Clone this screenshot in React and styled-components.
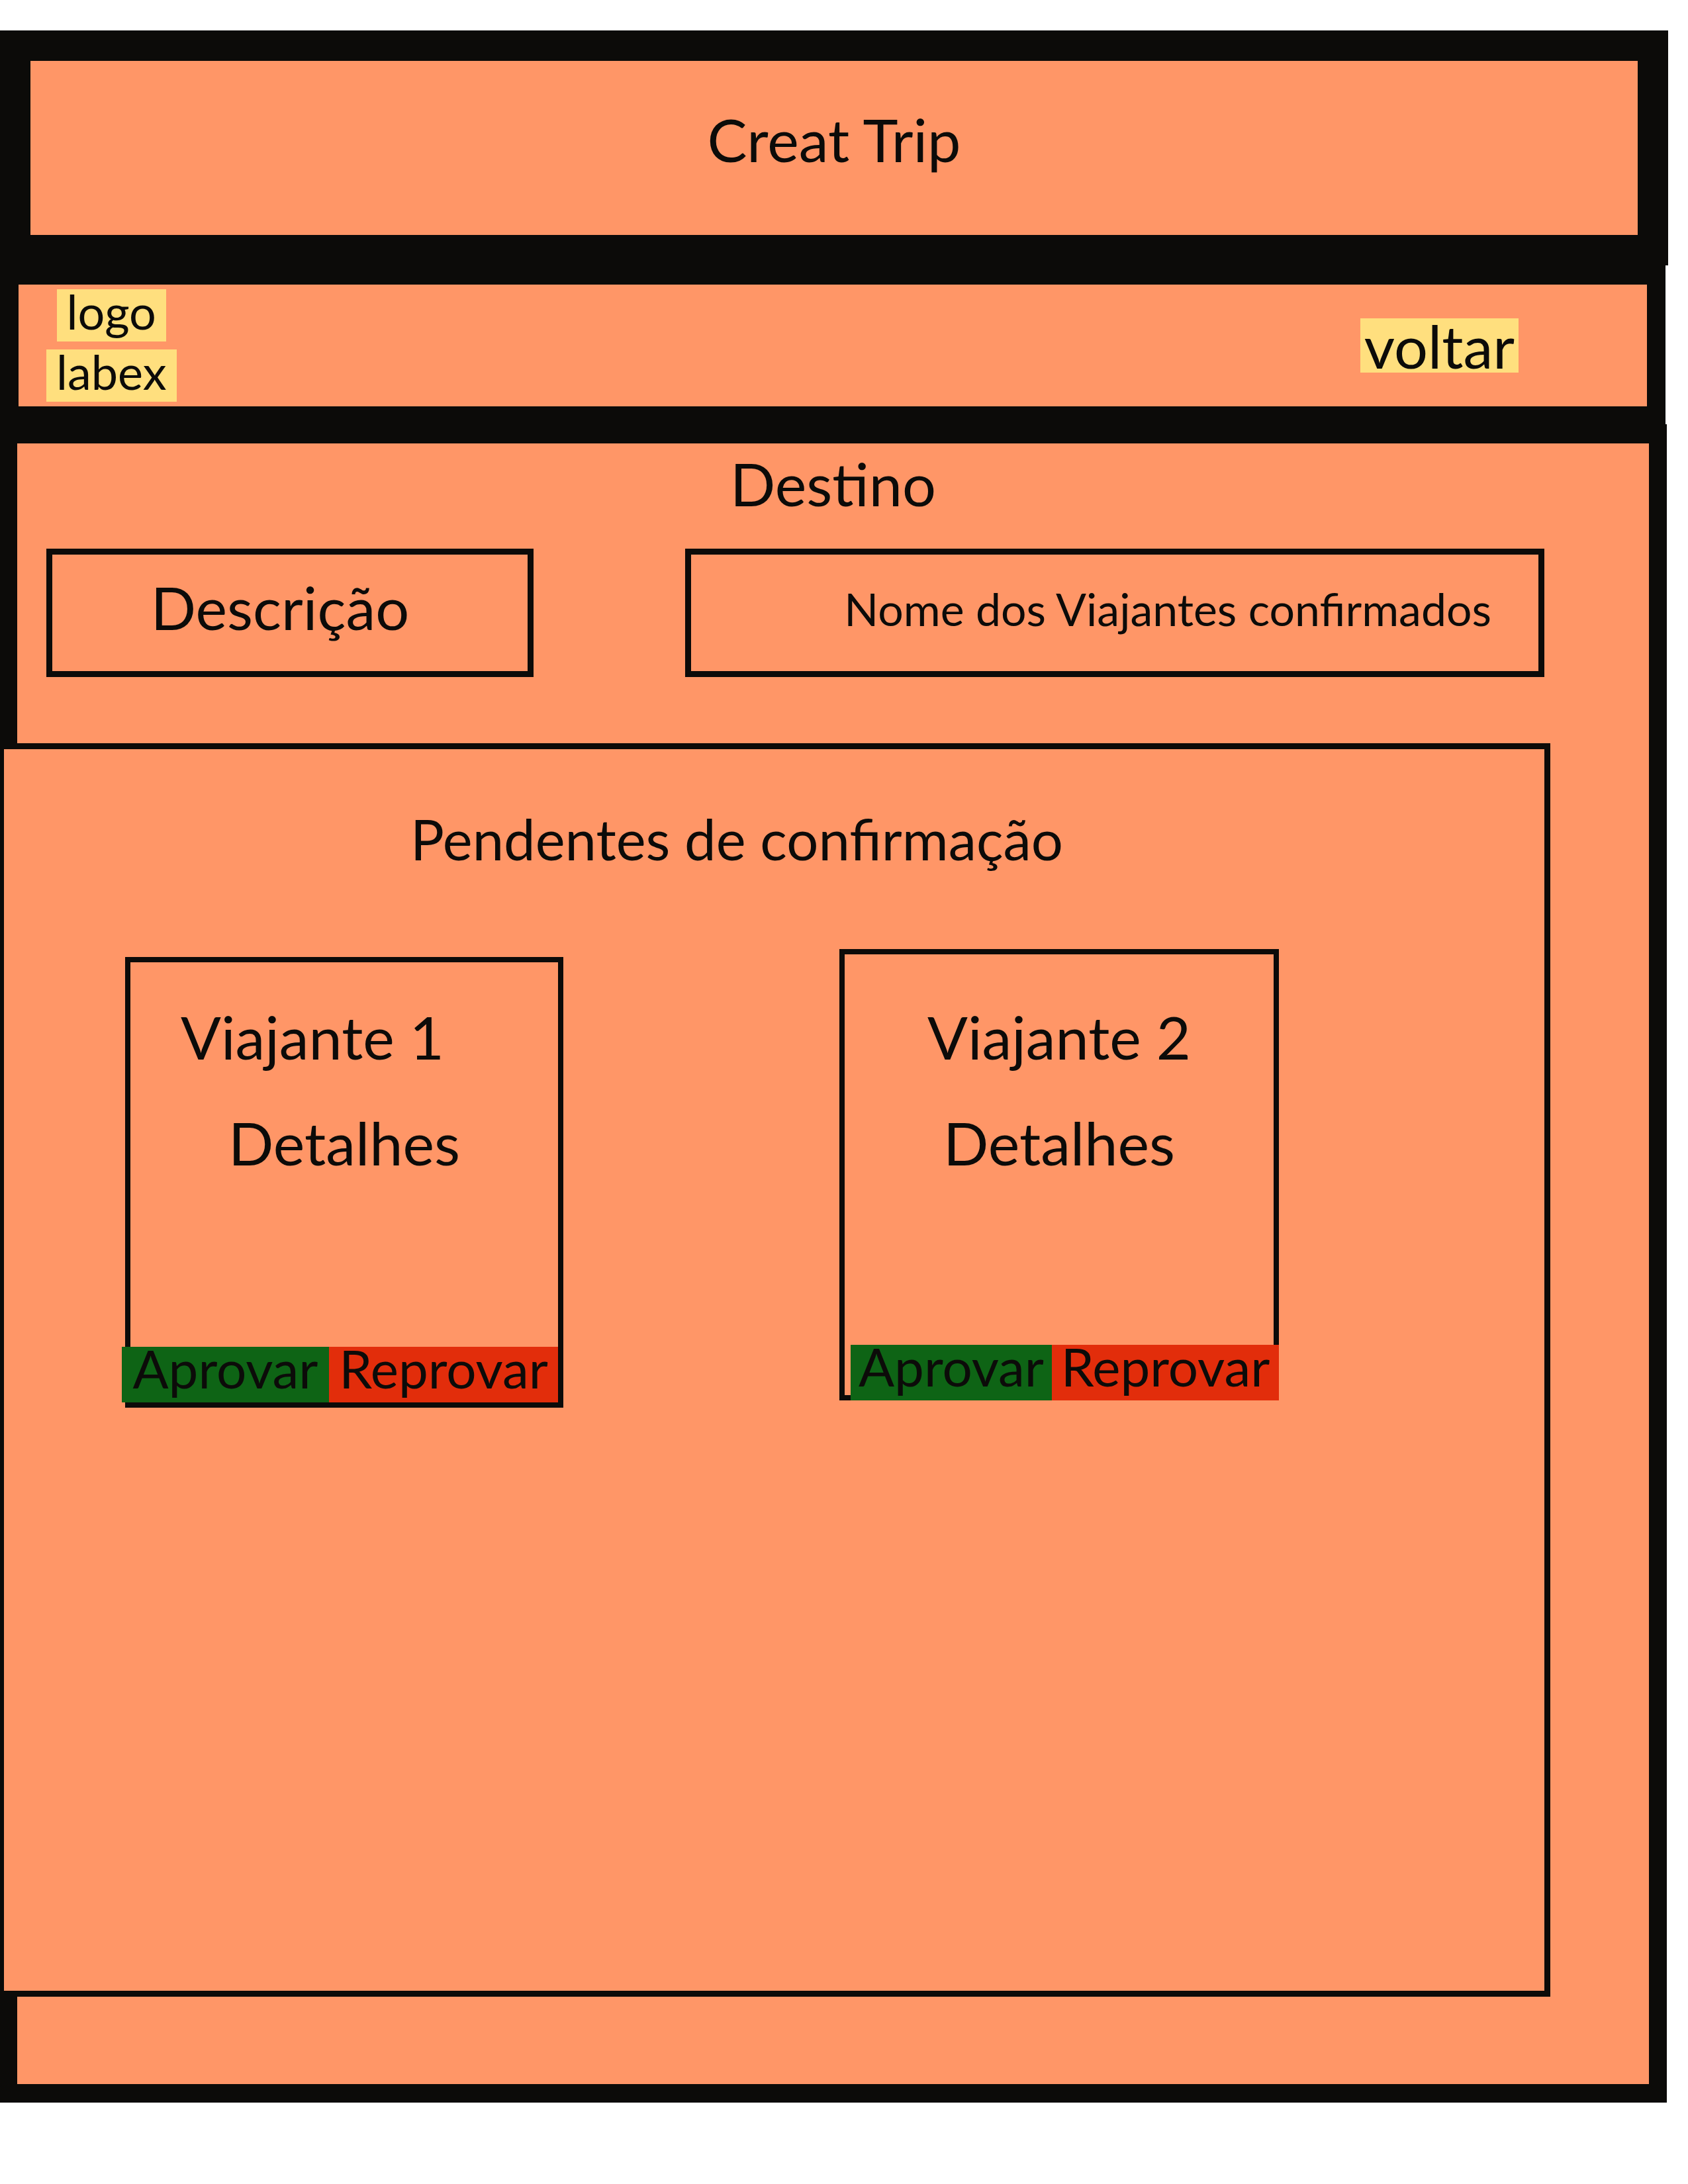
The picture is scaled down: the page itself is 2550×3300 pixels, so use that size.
import styled, { createGlobalStyle } from "styled-components";

const INK = "#0c0b09";
const ORANGE = "#ff9667";

const GlobalStyle = createGlobalStyle`
  body {
    margin: 0;
    background: #ffffff;
    font-family: "Lato", "Liberation Sans", sans-serif;
    color: ${INK};
  }
`;

const Page = styled.div`
  padding: 46px 0 123px;
  display: flex;
  flex-direction: column;
  align-items: flex-start;
`;

const Header = styled.header`
  width: 2428px;
  height: 190px;
  padding-top: 73px;
  border: 46px solid ${INK};
  background: ${ORANGE};
  display: flex;
  justify-content: center;
  align-items: flex-start;
`;

const Title = styled.h1`
  margin: 0;
  font-size: ${(p) => p.$size || 90}px;
  font-weight: 400;
  line-height: 1;
  text-align: ${(p) => p.$align || "center"};
  padding: ${(p) => p.$pad || "0"};
`;

const Nav = styled.nav`
  width: 2224px;
  height: 184px;
  border-style: solid;
  border-color: ${INK};
  border-width: 29px 28px 27px 28px;
  background: ${ORANGE};
  padding: 0 194px 0 42px;
  display: flex;
  align-items: center;
  justify-content: space-between;
`;

const LogoStack = styled.div`
  display: flex;
  flex-direction: column;
  align-items: center;
  gap: 12px;
`;

const Tag = styled.span`
  display: inline-block;
  background: #ffdf7e;
  font-size: ${(p) => p.$size || 72}px;
  height: ${(p) => p.$h || 79}px;
  line-height: ${(p) => p.$lh || 66}px;
  padding: 0 ${(p) => p.$px || 15}px;
  box-sizing: border-box;
`;

const Main = styled.main`
  width: 2465px;
  border-style: solid;
  border-color: ${INK};
  border-width: 29px 27px 28px 26px;
  background: ${ORANGE};
  padding: 15px 0 132px;
  display: flex;
  flex-direction: column;
`;

const BoxRow = styled.div`
  display: flex;
  gap: 229px;
  margin: 54px 0 0 44px;
`;

const InfoBox = styled.div`
  width: ${(p) => p.$w}px;
  height: 194px;
  box-sizing: border-box;
  border: 9px solid ${INK};
  display: flex;
  align-items: center;
  justify-content: ${(p) => p.$justify || "center"};
  padding: ${(p) => p.$pad || "0"};
  font-size: ${(p) => p.$size || 90}px;
  line-height: 1;
`;

const Pending = styled.section`
  width: 2342px;
  height: 1894px;
  box-sizing: border-box;
  margin: 100px 0 0 -26px;
  border: 9px solid ${INK};
  border-left-width: 6px;
  background: ${ORANGE};
  padding-top: 93px;
  display: flex;
  flex-direction: column;
`;

const CardRow = styled.div`
  display: flex;
  align-items: flex-start;
  gap: 417px;
  margin-top: 124px;
  padding-left: 183px;
`;

const Card = styled.div`
  width: ${(p) => p.$w}px;
  height: ${(p) => p.$h}px;
  margin-top: ${(p) => p.$mt || 0}px;
  box-sizing: border-box;
  border: 8px solid ${INK};
  padding-top: ${(p) => p.$pt}px;
  display: flex;
  flex-direction: column;
  align-items: stretch;
`;

const CardText = styled.div`
  font-size: 90px;
  line-height: 1;
  text-align: center;
  padding-right: ${(p) => p.$shift || 0}px;
  margin-top: ${(p) => p.$mt || 0}px;
`;

const Actions = styled.div`
  margin: auto 0 0;
  margin-left: ${(p) => p.$ml}px;
  margin-right: ${(p) => p.$mr || 0}px;
  margin-bottom: ${(p) => p.$mb || 0}px;
  display: flex;
`;

const ActionBtn = styled.button`
  border: none;
  margin: 0;
  font-family: inherit;
  color: ${INK};
  font-size: 80px;
  height: 84px;
  line-height: 64px;
  padding: 0 0 20px;
  text-align: center;
  background: ${(p) => (p.$approve ? "#0e6415" : "#e22d0b")};
  width: ${(p) => (p.$w ? `${p.$w}px` : "auto")};
  flex: ${(p) => (p.$w ? "none" : "1")};
  cursor: pointer;
`;

const travelers = [
  { name: "Viajante 1", w: 662, h: 681, mt: 12, pt: 67, shift: 96, ml: -13, mr: 0, mb: 0, green: 313 },
  { name: "Viajante 2", w: 664, h: 682, mt: 0, pt: 79, shift: 0, ml: 9, mr: -8, mb: -8, green: 304 },
];

export default function App() {
  return (
    <>
      <GlobalStyle />
      <Page>
        <Header>
          <Title>Creat Trip</Title>
        </Header>

        <Nav>
          <LogoStack>
            <Tag>logo</Tag>
            <Tag>labex</Tag>
          </LogoStack>
          <Tag $size={90} $h={82} $lh={82} $px={6}>
            voltar
          </Tag>
        </Nav>

        <Main>
          <Title as="h2">Destino</Title>

          <BoxRow>
            <InfoBox $w={736} $pad="0 30px 18px 0">
              Descrição
            </InfoBox>
            <InfoBox $w={1298} $justify="flex-end" $pad="0 71px 12px 0" $size={68}>
              Nome dos Viajantes confirmados
            </InfoBox>
          </BoxRow>

          <Pending>
            <Title as="h3" $size={85} $align="left" $pad="0 0 0 614px">
              Pendentes de confirmação
            </Title>

            <CardRow>
              {travelers.map((t) => (
                <Card key={t.name} $w={t.w} $h={t.h} $mt={t.mt} $pt={t.pt}>
                  <CardText $shift={t.shift}>{t.name}</CardText>
                  <CardText $mt={70}>Detalhes</CardText>
                  <Actions $ml={t.ml} $mr={t.mr} $mb={t.mb}>
                    <ActionBtn $approve $w={t.green}>
                      Aprovar
                    </ActionBtn>
                    <ActionBtn>Reprovar</ActionBtn>
                  </Actions>
                </Card>
              ))}
            </CardRow>
          </Pending>
        </Main>
      </Page>
    </>
  );
}
